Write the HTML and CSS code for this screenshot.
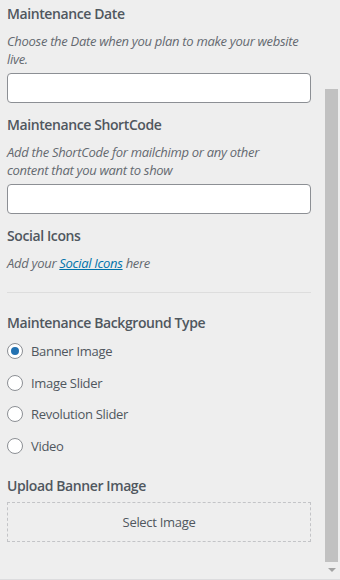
FILE: index.html
```html
<!DOCTYPE html>
<html lang="en">
<head>
  <meta charset="UTF-8">
  <meta name="viewport" content="width=device-width, initial-scale=1.0">
  <title>Maintenance Settings</title>
  <link rel="stylesheet" href="styles.css">
</head>
<body>
  <div class="panel">
    <div class="controls">

      <div class="control">
        <span class="control-title">Maintenance Date</span>
        <span class="control-desc">Choose the Date when you plan to make your website live.</span>
        <input type="text" class="text-input">
      </div>

      <div class="control">
        <span class="control-title">Maintenance ShortCode</span>
        <span class="control-desc">Add the ShortCode for mailchimp or any other<br>content that you want to show</span>
        <input type="text" class="text-input">
      </div>

      <div class="control control-social">
        <span class="control-title">Social Icons</span>
        <span class="control-desc">Add your <a href="#">Social Icons</a> here</span>
      </div>

      <hr class="divider">

      <div class="control control-radio">
        <span class="control-title">Maintenance Background Type</span>
        <div class="radio-list">
          <label class="radio-row"><input type="radio" name="bgtype" checked> Banner Image</label>
          <label class="radio-row"><input type="radio" name="bgtype"> Image Slider</label>
          <label class="radio-row"><input type="radio" name="bgtype"> Revolution Slider</label>
          <label class="radio-row"><input type="radio" name="bgtype"> Video</label>
        </div>
      </div>

      <div class="control control-upload">
        <span class="control-title">Upload Banner Image</span>
        <button class="upload-button">Select Image</button>
      </div>

    </div>

    <div class="scrollbar">
      <div class="scroll-thumb"></div>
      <div class="scroll-arrow"></div>
    </div>
  </div>
</body>
</html>
```

FILE: styles.css
```css
html, body {
  margin: 0;
  height: 100%;
}
body {
  font-family: "Open Sans", "Noto Sans", sans-serif;
  font-size: 13px;
  letter-spacing: -0.3px;
  color: #50575e;
  background-color: #eeeeee;
}
.panel {
  display: flex;
  height: 579px;
  border-bottom: 1px solid #dcdcde;
}
.controls {
  width: 304px;
  padding: 4px 0 0 7px;
  flex-shrink: 0;
}
.control {
  margin-bottom: 12px;
}
.control-title {
  display: block;
  font-size: 14px;
  font-weight: 600;
  line-height: 20px;
  letter-spacing: -0.4px;
  margin-bottom: 8px;
  color: #50575e;
}
.control-desc {
  display: block;
  font-style: italic;
  line-height: 18px;
  margin-bottom: 5px;
  color: #646970;
}
.control-desc a {
  color: #0073aa;
}
.text-input {
  display: block;
  box-sizing: border-box;
  width: 100%;
  height: 30px;
  margin: 0;
  border: 1px solid #8c8f94;
  border-radius: 4px;
  background-color: #fff;
}
.control-social {
  margin-bottom: 20px;
}
.divider {
  border: none;
  border-top: 1px solid #dddddd;
  margin: 0 0 20px;
}
.radio-list {
  display: flex;
  flex-direction: column;
  gap: 11.7px;
}
.radio-row {
  display: flex;
  align-items: center;
  gap: 8px;
  line-height: 20px;
}
.radio-row input {
  appearance: none;
  width: 16px;
  height: 16px;
  margin: 0;
  border: 1px solid #8c8f94;
  border-radius: 50%;
  background-color: #fff;
  display: grid;
  place-items: center;
}
.radio-row input:checked::before {
  content: "";
  width: 8px;
  height: 8px;
  border-radius: 50%;
  background-color: #2271b1;
}
.control-radio {
  margin-bottom: 20px;
}
.control-upload .control-title {
  margin-bottom: 6px;
}
.upload-button {
  display: block;
  width: 100%;
  height: 40px;
  border: 1px dashed #c3c4c7;
  background: transparent;
  font-family: inherit;
  font-size: 13px;
  letter-spacing: -0.3px;
  color: #50575e;
}
.scrollbar {
  margin-left: 14px;
  width: 13px;
  display: flex;
  flex-direction: column;
  align-items: center;
}
.scroll-thumb {
  margin-top: 89px;
  width: 13px;
  height: 473px;
  background-color: #c1c1c1;
}
.scroll-arrow {
  margin-top: 6px;
  width: 0;
  height: 0;
  border-left: 4px solid transparent;
  border-right: 4px solid transparent;
  border-top: 4px solid #a3a3a3;
}
```
